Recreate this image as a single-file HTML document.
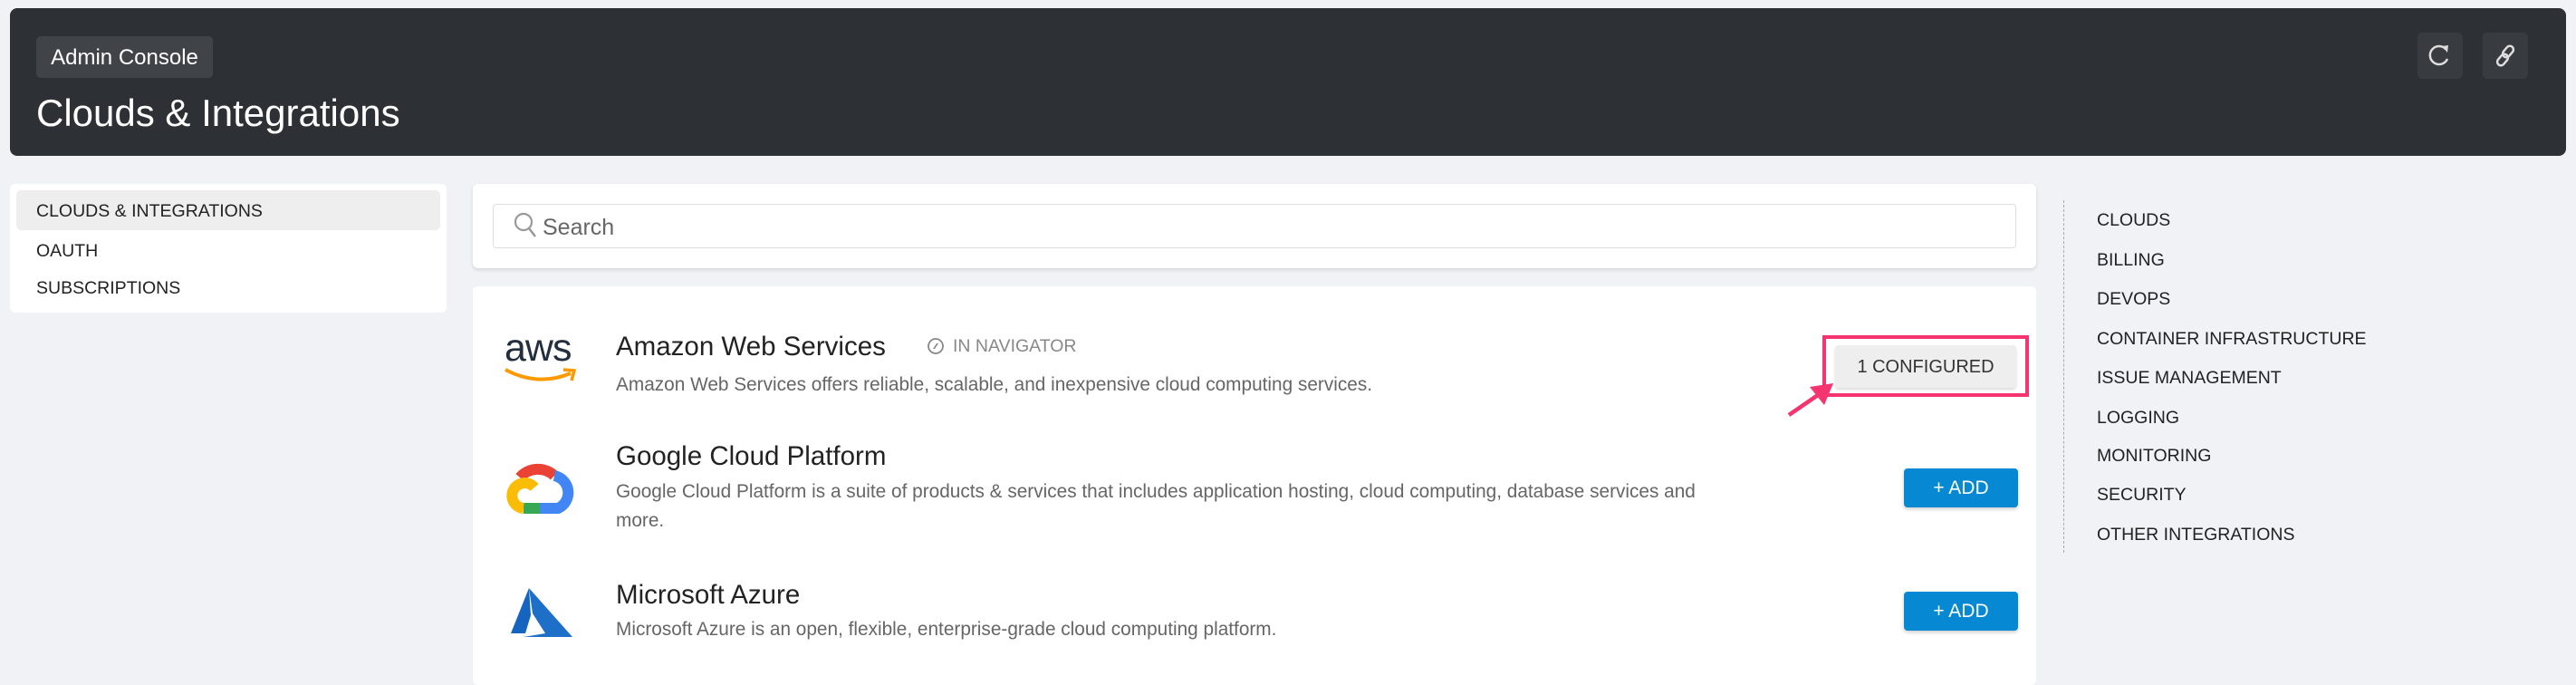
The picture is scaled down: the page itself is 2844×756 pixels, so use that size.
<!DOCTYPE html>
<html><head><meta charset="utf-8"><style>
*{box-sizing:border-box;margin:0;padding:0}
body{width:2844px;height:738px;overflow:hidden;background:#f1f2f6;font-family:"Liberation Sans",sans-serif;color:#222;position:relative}
.abs{position:absolute}
.hdr{left:11px;top:9px;width:2822px;height:163px;background:#2d3135;border-radius:8px}
.badge{left:40px;top:40px;width:195px;height:46px;background:#404448;border-radius:5px;color:#fff;font-size:24px;line-height:48px;text-align:center}
.title{left:40px;top:99px;color:#fff;font-size:42px;line-height:52px}
.ib{top:36px;width:50px;height:51px;background:#383c40;border-radius:5px}
.card{background:#fff;border-radius:6px}
.nav{font-size:19.5px;color:#222}
.navi{position:absolute;left:40px}
.r{position:absolute;left:2315px;font-size:19.5px;color:#222;line-height:24px}
.t{position:absolute;left:680px;font-size:29.5px;color:#222;line-height:36px}
.d{position:absolute;left:680px;font-size:20.8px;color:#666;line-height:32px}
.add{position:absolute;left:2102px;width:126px;height:43px;background:#0788d2;border-radius:4px;color:#fff;font-size:21px;line-height:43px;text-align:center;box-shadow:0 2px 4px rgba(0,0,0,.2)}
</style></head><body>
<div class="abs hdr"></div>
<div class="abs badge">Admin Console</div>
<div class="abs title">Clouds &amp; Integrations</div>
<div class="abs ib" style="left:2669px"><svg width="50" height="51" viewBox="0 0 50 51"><path d="M31 18 A10 10 0 1 0 33 29" fill="none" stroke="#ddd" stroke-width="2.5"/><path d="M27 15 L34 14 L33 22 Z" fill="#ddd"/></svg></div>
<div class="abs ib" style="left:2741px"><svg width="50" height="51" viewBox="0 0 50 51"><g fill="none" stroke="#ddd" stroke-width="2.5"><rect x="24" y="14" width="8" height="14" rx="4" transform="rotate(40 28 21)"/><rect x="18" y="23" width="8" height="14" rx="4" transform="rotate(40 22 30)"/></g></svg></div>

<div class="abs card" style="left:11px;top:203px;width:482px;height:142px"></div>
<div class="abs" style="left:18px;top:210px;width:468px;height:44px;background:#eee;border-radius:5px"></div>
<div class="navi nav" style="top:222px">CLOUDS &amp; INTEGRATIONS</div>
<div class="navi nav" style="top:266px">OAUTH</div>
<div class="navi nav" style="top:307px">SUBSCRIPTIONS</div>

<div class="abs card" style="left:522px;top:203px;width:1726px;height:93px;box-shadow:0 2px 4px rgba(0,0,0,.12)"></div>
<div class="abs" style="left:544px;top:225px;width:1682px;height:49px;border:1px solid #ddd;border-radius:4px"></div>
<svg class="abs" style="left:566px;top:233px" width="30" height="34" viewBox="0 0 30 34"><circle cx="12" cy="12" r="9" fill="none" stroke="#999" stroke-width="2.2"/><path d="M18 19 L25 28" stroke="#999" stroke-width="2.5"/></svg>
<div class="abs" style="left:599px;top:237px;font-size:25px;color:#666">Search</div>

<div class="abs card" style="left:522px;top:316px;width:1726px;height:440px"></div>

<!-- AWS -->
<div class="abs" style="left:557px;top:362px;font-size:43px;color:#232f3e;letter-spacing:-1px;line-height:44px">aws</div>
<svg class="abs" style="left:556px;top:405px" width="82" height="22" viewBox="0 0 82 22"><path d="M2 3 Q38 22 74 7" fill="none" stroke="#f90" stroke-width="4"/><path d="M66 3 L78 4 L75 15" fill="none" stroke="#f90" stroke-width="3.5"/></svg>
<div class="t" style="top:365px">Amazon Web Services</div>
<svg class="abs" style="left:1023px;top:372px" width="20" height="20" viewBox="0 0 20 20"><circle cx="10" cy="10" r="8" fill="none" stroke="#888" stroke-width="1.8"/><path d="M13 7 L9 13 L7 13 L11 7Z" fill="#888"/></svg>
<div class="abs" style="left:1052px;top:371px;font-size:19.5px;color:#888">IN NAVIGATOR</div>
<div class="d" style="top:409px">Amazon Web Services offers reliable, scalable, and inexpensive cloud computing services.</div>
<div class="abs" style="left:2026px;top:381px;width:200px;height:47px;background:#eee;border-radius:4px;font-size:20px;line-height:49px;text-align:center;color:#333;box-shadow:0 2px 3px rgba(0,0,0,.15)">1 CONFIGURED</div>
<div class="abs" style="left:2012px;top:370px;width:228px;height:68px;border:4px solid #f6346f"></div>
<svg class="abs" style="left:1970px;top:415px" width="60" height="50" viewBox="0 0 60 50"><path d="M5 43 L40 19" stroke="#f6346f" stroke-width="4.5"/><path d="M28 12 L54 8 L44 32 Z" fill="#f6346f"/></svg>

<!-- GCP -->
<svg class="abs" style="left:558px;top:507px" width="78" height="62" viewBox="0 0 78 62">
<path d="M16 20 A25 23 0 0 1 54 18" fill="none" stroke="#ea4335" stroke-width="12"/>
<path d="M54 18 A19 19 0 0 1 58 54 L38 54" fill="none" stroke="#4285f4" stroke-width="12"/>
<path d="M38 54 L20 54" fill="none" stroke="#34a853" stroke-width="12"/>
<path d="M20 54 A14 14 0 1 1 32 31" fill="none" stroke="#fbbc05" stroke-width="12"/>
</svg>
<div class="t" style="top:486px">Google Cloud Platform</div>
<div class="d" style="top:527px">Google Cloud Platform is a suite of products &amp; services that includes application hosting, cloud computing, database services and</div>
<div class="d" style="top:559px">more.</div>
<div class="add" style="top:517px">+ ADD</div>

<!-- Azure -->
<svg class="abs" style="left:562px;top:649px" width="72" height="55" viewBox="0 0 72 55"><path d="M22 0 L2 50 L18 50 L24 30 Z" fill="#1565c0"/><path d="M22 0 L70 54 L16 54 L40 50 L26 28 Z" fill="#1e6fc8"/></svg>
<div class="t" style="top:639px">Microsoft Azure</div>
<div class="d" style="top:679px">Microsoft Azure is an open, flexible, enterprise-grade cloud computing platform.</div>
<div class="add" style="top:653px">+ ADD</div>

<!-- right nav -->
<div class="abs" style="left:2278px;top:221px;height:389px;border-left:1px dashed #aaa"></div>
<div class="r" style="top:231px">CLOUDS</div>
<div class="r" style="top:275px">BILLING</div>
<div class="r" style="top:318px">DEVOPS</div>
<div class="r" style="top:362px">CONTAINER INFRASTRUCTURE</div>
<div class="r" style="top:405px">ISSUE MANAGEMENT</div>
<div class="r" style="top:449px">LOGGING</div>
<div class="r" style="top:491px">MONITORING</div>
<div class="r" style="top:534px">SECURITY</div>
<div class="r" style="top:578px">OTHER INTEGRATIONS</div>
</body></html>
